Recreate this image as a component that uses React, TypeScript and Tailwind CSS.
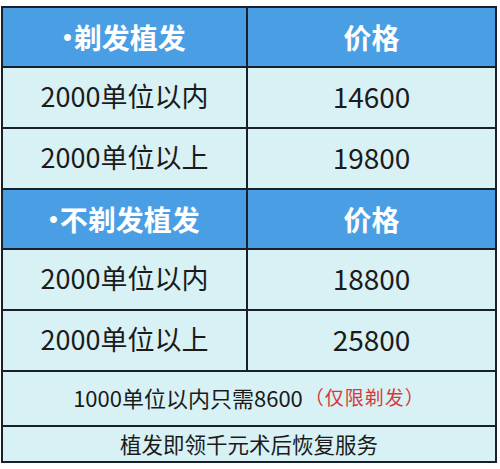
const font = { fontFamily: '"Noto Sans CJK SC", "Noto Sans", sans-serif' };

const sections = [
  {
    title: "剃发植发",
    rows: [
      ["2000单位以内", "14600"],
      ["2000单位以上", "19800"],
    ],
  },
  {
    title: "不剃发植发",
    rows: [
      ["2000单位以内", "18800"],
      ["2000单位以上", "25800"],
    ],
  },
];

function HeaderRow({ title }: { title: string }) {
  return (
    <div className="grid grid-cols-[245px_1fr] h-[60px] bg-[#4a9fe4] border-b-2 border-[#17202b]">
      <div className="flex items-center justify-center border-r-2 border-[#17202b] text-white font-bold text-[28px]">
        <span className="mr-[2px] text-[24px]" style={{ fontFamily: '"Liberation Sans", sans-serif' }}>
          •
        </span>
        {title}
      </div>
      <div className="flex items-center justify-center text-white font-bold text-[28px]">价格</div>
    </div>
  );
}

function DataRow({ label, price }: { label: string; price: string }) {
  return (
    <div className="grid grid-cols-[245px_1fr] h-[61px] bg-[#d8f1f5] border-b-2 border-[#17202b]">
      <div className="flex items-center justify-center pb-[3px] border-r-2 border-[#17202b] text-[#1b1b1b] text-[27px]">
        {label}
      </div>
      <div className="flex items-center justify-center pb-[3px] text-[#1b1b1b] text-[28px]">{price}</div>
    </div>
  );
}

export default function App() {
  return (
    <div className="w-[500px] h-[469px] bg-white pt-[6px] pl-[1px]" style={font}>
      <div className="w-[496px] border-2 border-[#17202b] flex flex-col">
        {sections.map((s) => (
          <div key={s.title}>
            <HeaderRow title={s.title} />
            {s.rows.map(([label, price]) => (
              <DataRow key={label} label={label} price={price} />
            ))}
          </div>
        ))}
        <div className="h-[55px] bg-[#d8f1f5] border-b-2 border-[#17202b] flex items-center justify-center pb-[2px] text-[#1b1b1b] text-[22px]">
          1000单位以内只需8600
          <span className="ml-[2px] text-[#d6393b] text-[19px] tracking-[1px]">（仅限剃发）</span>
        </div>
        <div className="h-[34px] bg-[#d8f1f5] flex items-center justify-center text-[#1b1b1b] text-[21.5px]">
          植发即领千元术后恢复服务
        </div>
      </div>
    </div>
  );
}
